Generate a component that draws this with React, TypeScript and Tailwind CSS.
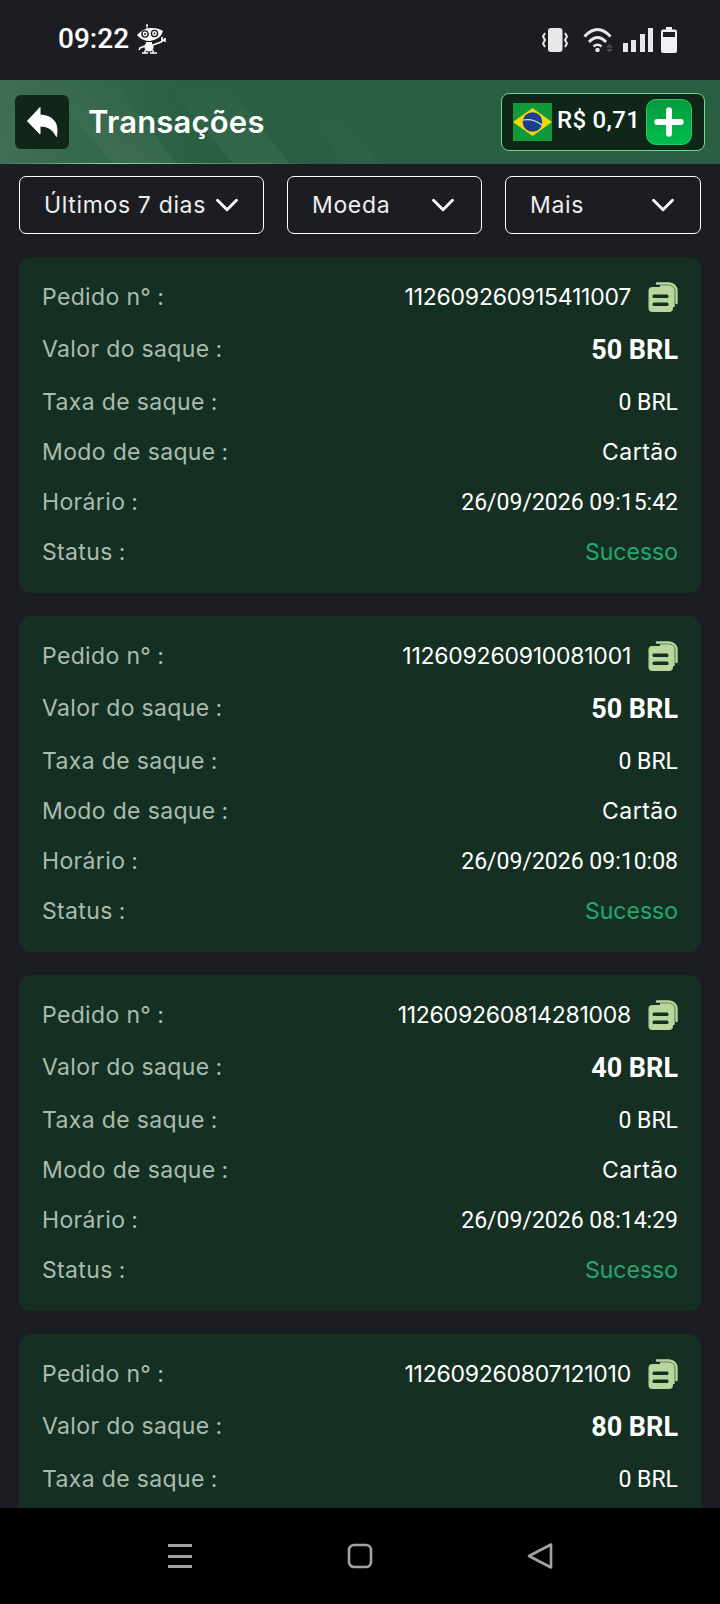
import { ChevronDown } from "lucide-react"
import type { ReactNode } from "react"

const montserrat = "font-['Inter','Noto_Sans',sans-serif]"
const roboto = "font-['Roboto',sans-serif] text-white"

const orders = [
  { id: "112609260915411007", amount: "50 BRL", time: "26/09/2026 09:15:42" },
  { id: "112609260910081001", amount: "50 BRL", time: "26/09/2026 09:10:08" },
  { id: "112609260814281008", amount: "40 BRL", time: "26/09/2026 08:14:29" },
  { id: "112609260807121010", amount: "80 BRL", time: "" },
]

function Robot() {
  return (
    <svg viewBox="0 0 30 30" className="h-[30px] w-[30px]" fill="none">
      <path d="M10 1v4" stroke="#fff" strokeWidth="1" />
      <circle cx="10" cy="1.200" r="1" fill="#fff" />
      <path d="M0 11 Q6 4.500 13 4 Q21 3.500 26 7 Q24 15 13 17 Q5 17 0 11Z" fill="#fff" />
      <circle cx="8" cy="10" r="3.800" fill="#1c1d22" />
      <circle cx="8" cy="10" r="2.400" fill="#fff" />
      <circle cx="8" cy="10" r="1" fill="#1c1d22" />
      <circle cx="17.500" cy="9.500" r="3.800" fill="#1c1d22" />
      <circle cx="17.500" cy="9.500" r="2.400" fill="#fff" />
      <circle cx="17.500" cy="9.500" r="1" fill="#1c1d22" />
      <circle cx="12" cy="23" r="4.600" fill="#fff" />
      <path d="M9 18h6v2H9z" fill="#fff" />
      <path d="M16 21l8-3 4-3M28 14l0 4M25 13l0 4M8 22l-5 2-1 2" stroke="#fff" strokeWidth="1.600" />
      <path d="M5 29h6M13 29h7M8 26v3M16 26v3" stroke="#fff" strokeWidth="1.400" />
    </svg>
  )
}

function StatusBar() {
  return (
    <div className="flex h-20 shrink-0 items-center justify-between pl-[58px] pr-[43px]">
      <div className="mb-[2px] flex items-center gap-[8px]">
        <span className="font-['Roboto',sans-serif] text-[28px] font-medium leading-none text-white">09:22</span>
        <Robot />
      </div>
      <div className="flex items-center">
        <svg viewBox="0 0 26 24" className="mr-[15px] h-[24px] w-[26px]" fill="#e8e8e8">
          <rect x="6" y="0" width="14.500" height="24" rx="3" />
          <path d="M3 5 L1 8.500 L3 12 L1 15.500 L3 19" stroke="#e8e8e8" strokeWidth="2" fill="none" />
          <path d="M23 5 L25 8.500 L23 12 L25 15.500 L23 19" stroke="#e8e8e8" strokeWidth="2" fill="none" />
        </svg>
        <svg viewBox="0 0 30 24" className="mr-[10px] h-[24px] w-[30px]" fill="none">
          <path d="M1.500 8.500 Q14.500-5.500 27.500 8.500" stroke="#e8e8e8" strokeWidth="3" />
          <path d="M6 14 Q14.500 5 23 14" stroke="#e8e8e8" strokeWidth="3" />
          <path d="M10.500 18.500 Q14.500 15 18.500 18.500" stroke="#e8e8e8" strokeWidth="2.600" />
          <circle cx="14.500" cy="22" r="2.200" fill="#e8e8e8" />
          <path d="M23 19.500h7l-3.500-3.500zM23 21h7l-3.500 3.500z" fill="#4d4e52" />
        </svg>
        <div className="mr-[8px] flex h-[24px] items-end gap-[3.5px]">
          <div className="h-[9px] w-[5px] bg-[#e8e8e8]" />
          <div className="h-[12px] w-[5px] bg-[#e8e8e8]" />
          <div className="h-[18px] w-[5px] bg-[#e8e8e8]" />
          <div className="h-[24px] w-[5px] bg-[#e8e8e8]" />
        </div>
        <svg viewBox="0 0 16 26" className="h-[26px] w-[16px]">
          <path d="M5 0h6v2.500h3a2 2 0 0 1 2 2V24a2 2 0 0 1-2 2H2a2 2 0 0 1-2-2V4.500a2 2 0 0 1 2-2h3z" fill="#f0f0f0" />
          <rect x="2" y="5" width="12" height="5" fill="#1c1d22" />
        </svg>
      </div>
    </div>
  )
}

function BrazilFlag() {
  return (
    <svg viewBox="0 0 39 38" className="h-[38px] w-[39px] shrink-0">
      <rect width="39" height="38" fill="#0f9b3a" />
      <path d="M19.500 5 L39 19 L19.500 33 L0 19Z" fill="#f6d60b" />
      <circle cx="19.500" cy="19" r="9.800" fill="#1d3f8f" />
      <path d="M10 17 Q20 15 29 22" stroke="#d5dbe6" strokeWidth="1.200" fill="none" />
    </svg>
  )
}

function Header() {
  return (
    <div className="relative flex h-[84px] shrink-0 items-center justify-between overflow-hidden bg-[#2a5f43] pb-[1px] pl-[15px] pr-[15px]">
      <div className="absolute inset-0 bg-[linear-gradient(75deg,rgba(255,255,255,0.1),rgba(255,255,255,0)_28%)]" />
      {/* diagonal light bands */}
      <svg className="absolute inset-0 h-full w-full" viewBox="0 0 720 84" preserveAspectRatio="none">
        <defs>
          <linearGradient id="band" x1="0" y1="0" x2="0" y2="1">
            <stop offset="0" stopColor="#fff" stopOpacity="0.005" />
            <stop offset="1" stopColor="#fff" stopOpacity="0.05" />
          </linearGradient>
        </defs>
        <path d="M43 0h70l64 84h-64z" fill="url(#band)" />
        <path d="M165 0h58l67 84h-57z" fill="url(#band)" />
        <path d="M283 0h36l60 84h-36z" fill="url(#band)" fillOpacity="0.4" />
      </svg>
      <div className="absolute bottom-0 left-0 h-[1px] w-[310px] bg-[linear-gradient(90deg,rgba(110,230,140,0),#7ce89a_35%,rgba(110,230,140,0))]" />
      <div className="relative flex items-center">
        <button className="flex h-[54px] w-[54px] items-center justify-center rounded-[6px] bg-[#0f2618]">
          <svg viewBox="0 0 31 30" className="h-[30px] w-[31px]" fill="#fff">
            <path d="M13 0.500 L0.500 14 L13 27 L13 19 Q24 18.500 29.500 29.500 Q33 9 13 8Z" stroke="#fff" strokeWidth="1" strokeLinejoin="round" />
          </svg>
        </button>
        <h1 className={`ml-[19px] text-[31px] font-semibold leading-none tracking-[0.2px] text-white ${montserrat}`}>Transações</h1>
      </div>
      <div className="relative flex h-[58px] w-[204px] items-center rounded-[8px] border border-[#6fdc8c] bg-[#0f2618] pl-[11px] pr-[12px]">
        <BrazilFlag />
        <span className="mb-[3px] ml-[5px] font-['Roboto',sans-serif] text-[24px] font-medium leading-none tracking-[0.3px] text-white">R$ 0,71</span>
        <button className="ml-auto flex h-[46px] w-[46px] items-center justify-center rounded-[10px] border border-[#1fd068] bg-[linear-gradient(180deg,#049a3e,#00bd4c)]">
          <svg viewBox="0 0 28 28" className="h-[30px] w-[30px]">
            <path d="M14 3v22M3 14h22" stroke="#fff" strokeWidth="5.500" strokeLinecap="round" />
          </svg>
        </button>
      </div>
    </div>
  )
}

function Filter({ label, className }: { label: string; className: string }) {
  return (
    <button className={`flex h-[58px] items-center justify-between rounded-[7px] border border-white pl-[24px] ${className}`}>
      <span className={`text-[23px] leading-none tracking-[0.65px] text-[#eeeeee] ${montserrat}`}>{label}</span>
      <ChevronDown className="h-[38px] w-[38px] text-white" strokeWidth={1.8} />
    </button>
  )
}

function CopyIcon() {
  return (
    <svg viewBox="0 0 30 30" className="h-[30px] w-[30px]">
      <path d="M9 1.500h12a7.500 7.500 0 0 1 7.500 7.500v12" stroke="#b9d69d" strokeWidth="2.400" fill="none" strokeLinecap="round" />
      <path d="M12 4.500h9a4 4 0 0 1 4.500 4.500v16" stroke="#b9d69d" strokeWidth="2.400" fill="none" />
      <rect x="0.500" y="5" width="24.500" height="25" rx="4" fill="#b9d69d" />
      <rect x="4.500" y="12.500" width="16" height="3.600" rx="1.500" fill="#16301f" />
      <rect x="4.500" y="20.500" width="16" height="3.600" rx="1.500" fill="#16301f" />
    </svg>
  )
}

function Row({ label, className = "mb-[20px]", children }: { label: string; className?: string; children: ReactNode }) {
  return (
    <div className={`flex h-[30px] items-center justify-between ${className}`}>
      <span className={`text-[23px] leading-none tracking-[0.35px] text-[#a9bcae] ${montserrat}`}>
        {label}
        <span className="ml-[6px]">:</span>
      </span>
      {children}
    </div>
  )
}

function OrderCard({ id, amount, time }: { id: string; amount: string; time: string }) {
  return (
    <div className="shrink-0 rounded-[12px] bg-[#153022] pb-[26px] pl-[23px] pr-[23px] pt-[25px]">
      <Row label="Pedido n°" className="mb-[22px]">
        <div className="flex items-center gap-[17px]">
          <span className={`text-[23px] leading-none tracking-[-0.25px] text-white ${montserrat}`}>{id}</span>
          <CopyIcon />
        </div>
      </Row>
      <Row label="Valor do saque" className="mb-[23px]">
        <span className={`${roboto} pt-[2px] text-[27px] font-bold leading-none`}>{amount}</span>
      </Row>
      <Row label="Taxa de saque">
        <span className={`${roboto} text-[23px] leading-none`}>0 BRL</span>
      </Row>
      <Row label="Modo de saque">
        <span className={`text-[23px] leading-none tracking-[0.5px] text-white ${montserrat}`}>Cartão</span>
      </Row>
      <Row label="Horário">
        <span className={`${roboto} text-[23px] leading-none`}>{time}</span>
      </Row>
      <Row label="Status" className="">
        <span className={`text-[23px] leading-none text-[#22a86f] ${montserrat}`}>Sucesso</span>
      </Row>
    </div>
  )
}

function NavBar() {
  return (
    <div className="flex h-[96px] shrink-0 items-center justify-center gap-[154px] bg-black">
      <svg viewBox="0 0 26 26" className="h-[26px] w-[26px]" fill="#a3a3a3">
        <rect x="1" y="1" width="24" height="3" />
        <rect x="1" y="12" width="24" height="3" />
        <rect x="1" y="22" width="24" height="3" />
      </svg>
      <svg viewBox="0 0 26 26" className="h-[26px] w-[26px]" fill="none">
        <rect x="2" y="2" width="22" height="22" rx="5" stroke="#a3a3a3" strokeWidth="2.600" />
      </svg>
      <svg viewBox="0 0 26 26" className="h-[26px] w-[26px]" fill="none">
        <path d="M24 1.500 L2 13 L24 24.500Z" stroke="#a3a3a3" strokeWidth="2.600" strokeLinejoin="round" />
      </svg>
    </div>
  )
}

export default function App() {
  return (
    <div className="flex h-[1604px] w-[720px] flex-col overflow-hidden bg-[#1c1d22]">
      <StatusBar />
      <Header />
      <div className="flex min-h-0 flex-1 flex-col overflow-hidden px-[19px]">
        <div className="mt-[12px] flex shrink-0 justify-between">
          <Filter label="Últimos 7 dias" className="w-[245px] pr-[17px]" />
          <Filter label="Moeda" className="w-[195px] pr-[19px]" />
          <Filter label="Mais" className="w-[196px] pr-[18px]" />
        </div>
        <div className="mt-[23px] flex flex-col gap-[23px]">
          {orders.map((o) => (
            <OrderCard key={o.id} {...o} />
          ))}
        </div>
      </div>
      <NavBar />
    </div>
  )
}
